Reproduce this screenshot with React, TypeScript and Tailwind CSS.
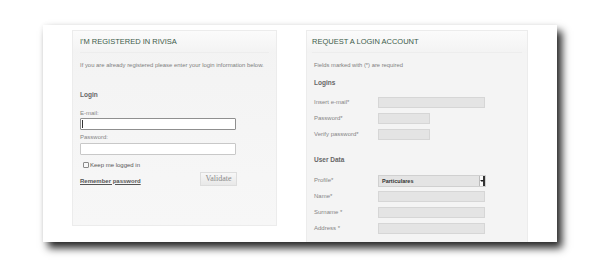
import React from 'react';

const Field: React.FC<{ label: string; wide?: boolean }> = ({ label, wide = true }) => (
    <div className="flex items-start h-[16px]">
        <span className="w-[64px] text-[6px] leading-[8px] text-[#858585] pt-[1px]">{label}</span>
        <div className={`h-[11px] bg-[#e4e4e4] border border-[#d6d6d6] ${wide ? 'w-[107px]' : 'w-[52px]'}`} />
    </div>
);

const PanelHeader: React.FC<{ title: string }> = ({ title }) => (
    <div className="h-[22px] flex items-center border-b border-[#ededed]">
        <h2 className="text-[7.5px] leading-none text-[#3d5c4a]">{title}</h2>
    </div>
);

const App: React.FC = () => {
    return (
        <div className="w-[601px] h-[266px] bg-white overflow-hidden pt-[25px] pl-[43px]" style={{ fontFamily: '"Liberation Sans", Arial, sans-serif' }}>
            <div className="w-[514px] h-[217px] bg-white overflow-hidden flex gap-[29px] pl-[29px] pt-[5px] shadow-[5px_6px_8px_rgba(0,0,0,0.85),0_0_5px_rgba(0,0,0,0.06)]">
                {/* left panel */}
                <div className="w-[205px] h-[196px] bg-gradient-to-b from-[#f3f3f3] to-[#f7f7f7] border border-[#ececec] flex flex-col">
                    <div className="px-[7px] bg-gradient-to-b from-[#fbfbfb] to-[#f3f3f3]">
                        <PanelHeader title="I'M REGISTERED IN RIVISA" />
                    </div>
                    <div className="px-[7px] flex flex-col">
                        <p className="mt-[8px] text-[5.9px] leading-[8px] text-[#7f7f7f] whitespace-nowrap">
                            If you are already registered please enter your login information below.
                        </p>
                        <h3 className="mt-[22px] text-[6.5px] leading-[8px] font-bold text-[#666666]">Login</h3>
                        <label className="mt-[10px] text-[6px] leading-[8px] text-[#858585]">E-mail:</label>
                        <div className="mt-[1px] w-[156px] h-[12px] bg-white border border-[#8f8f8f] rounded-[1px] flex items-center pl-[1px]">
                            <div className="w-[1px] h-[8px] bg-[#333333]" />
                        </div>
                        <label className="mt-[3px] text-[6px] leading-[8px] text-[#858585]">Password:</label>
                        <div className="mt-[2px] w-[156px] h-[12px] bg-white border border-[#c8c8c8] rounded-[1px]" />
                        <div className="mt-[6px] flex items-center gap-[1px] pl-[3px]">
                            <div className="w-[6px] h-[6px] border border-[#8a8a8a] rounded-[1px] bg-[#f8f8f8]" />
                            <span className="text-[6px] leading-[8px] text-[#555555]">Keep me logged in</span>
                        </div>
                        <div className="mt-[3px] flex items-center w-[157px] justify-between">
                            <a className="mt-[3px] text-[6px] leading-[8px] font-bold text-[#555555] underline">Remember password</a>
                            <button
                                className="w-[37px] h-[14px] border border-[#dddddd] bg-gradient-to-b from-[#f7f7f7] to-[#e8e8e8] text-[8px] leading-none text-[#8a8a8a]"
                                style={{ fontFamily: '"Liberation Serif", serif' }}
                            >
                                Validate
                            </button>
                        </div>
                    </div>
                </div>

                {/* right panel */}
                <div className="w-[222px] h-[230px] bg-[#f4f4f4] border border-[#ececec] flex flex-col">
                    <div className="px-[5px] bg-gradient-to-b from-[#fbfbfb] to-[#f3f3f3]">
                        <PanelHeader title="REQUEST A LOGIN ACCOUNT" />
                    </div>
                    <div className="px-[7px] flex flex-col">
                        <p className="mt-[8px] text-[5.8px] leading-[8px] text-[#7f7f7f]">Fields marked with (*) are required</p>
                        <h3 className="mt-[10px] text-[6.5px] leading-[8px] font-bold text-[#666666]">Logins</h3>
                        <div className="mt-[10px] flex flex-col">
                            <Field label="Insert e-mail*" />
                            <Field label="Password*" wide={false} />
                            <Field label="Verify password*" wide={false} />
                        </div>
                        <h3 className="mt-[11px] text-[6.5px] leading-[8px] font-bold text-[#666666]">User Data</h3>
                        <div className="mt-[11px] flex flex-col">
                            <div className="flex items-start h-[16px]">
                                <span className="w-[64px] text-[6px] leading-[8px] text-[#858585] pt-[1px]">Profile*</span>
                                <div className="w-[108px] h-[12px] bg-[#e4e4e4] border border-[#d0d0d0] flex items-center justify-between">
                                    <span className="pl-[3px] text-[5.5px] font-bold text-[#333333]">Particulares</span>
                                    <div className="w-[6px] h-[10px] bg-[#fafafa] border-l border-[#bbbbbb] border-r-2 border-r-[#333333] flex items-center justify-center">
                                        <div className="w-0 h-0 border-l-[2px] border-r-[2px] border-t-[2px] border-l-transparent border-r-transparent border-t-[#222222]" />
                                    </div>
                                </div>
                            </div>
                            <Field label="Name*" />
                            <Field label="Surname *" />
                            <Field label="Address *" />
                        </div>
                    </div>
                </div>
            </div>
        </div>
    );
};

export default App;
